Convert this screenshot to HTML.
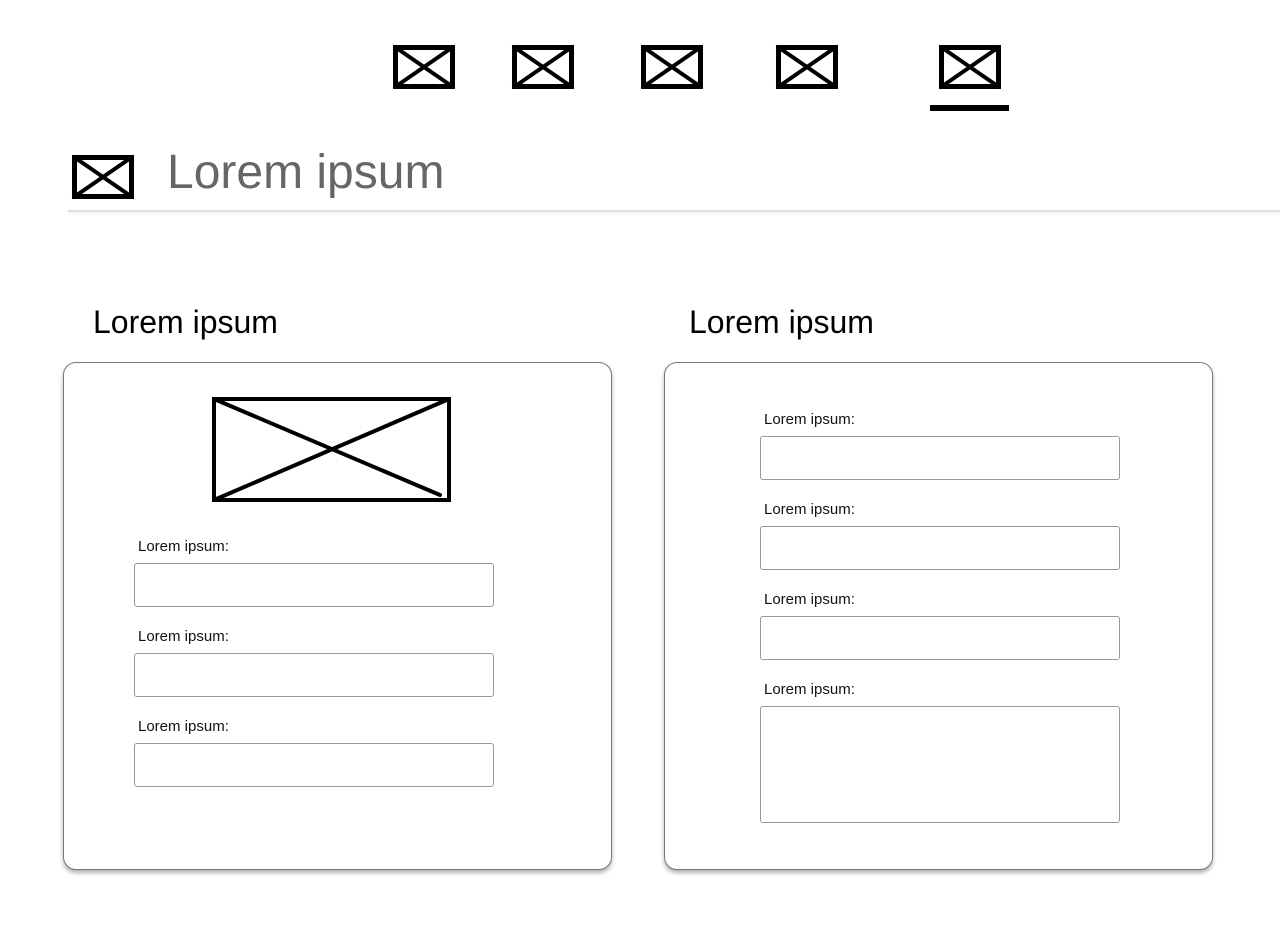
<!DOCTYPE html>
<html><head><style>
body{margin:0;width:1280px;height:932px;background:#fff;position:relative;overflow:hidden;font-family:"Liberation Sans",sans-serif;}
.a{position:absolute}
.card{position:absolute;border:1px solid #777;border-radius:13px;box-shadow:0 3px 4px rgba(0,0,0,.3);background:#fff;box-sizing:border-box}
.lbl{position:absolute;font-size:15px;color:#111}
.in{position:absolute;border:1px solid #999;border-radius:3px;box-sizing:border-box;width:360px;height:44px}
.t{position:absolute;font-size:32px;color:#000}
</style></head><body>
<svg class="a" style="left:0;top:0" width="1280" height="932">
<g fill="none" stroke="#000" stroke-width="5" stroke-linecap="round">
<g id="ic"><rect x="395.5" y="47.5" width="57" height="39"/><path d="M395 47L453 87M453 47L395 87" stroke-width="4"/></g>
<use href="#ic" x="119"/><use href="#ic" x="248"/><use href="#ic" x="383"/><use href="#ic" x="546"/>
<use href="#ic" x="-321" y="110"/>
</g>
<rect x="930" y="105" width="79" height="6" fill="#000"/>
</svg>
<div class="a" style="left:167px;top:145px;font-size:48px;color:#666">Lorem ipsum</div>
<div class="a" style="left:68px;top:210px;width:1212px;height:2px;background:#ddd;box-shadow:0 2px 3px rgba(0,0,0,.08)"></div>
<div class="t" style="left:93px;top:304px">Lorem ipsum</div>
<div class="t" style="left:689px;top:304px">Lorem ipsum</div>
<div class="card" style="left:63px;top:362px;width:549px;height:508px"></div>
<div class="card" style="left:664px;top:362px;width:549px;height:508px"></div>
<svg class="a" style="left:0;top:0" width="1280" height="932"><g fill="none" stroke="#000" stroke-width="4" stroke-linecap="round"><rect x="214" y="399" width="235" height="101"/><path d="M214 399L440 495M449 399L214 500"/></g></svg>
<div class="lbl" style="left:138px;top:538px">Lorem ipsum:</div><div class="in" style="left:134px;top:563px"></div>
<div class="lbl" style="left:138px;top:628px">Lorem ipsum:</div><div class="in" style="left:134px;top:653px"></div>
<div class="lbl" style="left:138px;top:718px">Lorem ipsum:</div><div class="in" style="left:134px;top:743px"></div>
<div class="lbl" style="left:764px;top:411px">Lorem ipsum:</div><div class="in" style="left:760px;top:436px"></div>
<div class="lbl" style="left:764px;top:501px">Lorem ipsum:</div><div class="in" style="left:760px;top:526px"></div>
<div class="lbl" style="left:764px;top:591px">Lorem ipsum:</div><div class="in" style="left:760px;top:616px"></div>
<div class="lbl" style="left:764px;top:681px">Lorem ipsum:</div><div class="in" style="left:760px;top:706px;height:117px"></div>
</body></html>
